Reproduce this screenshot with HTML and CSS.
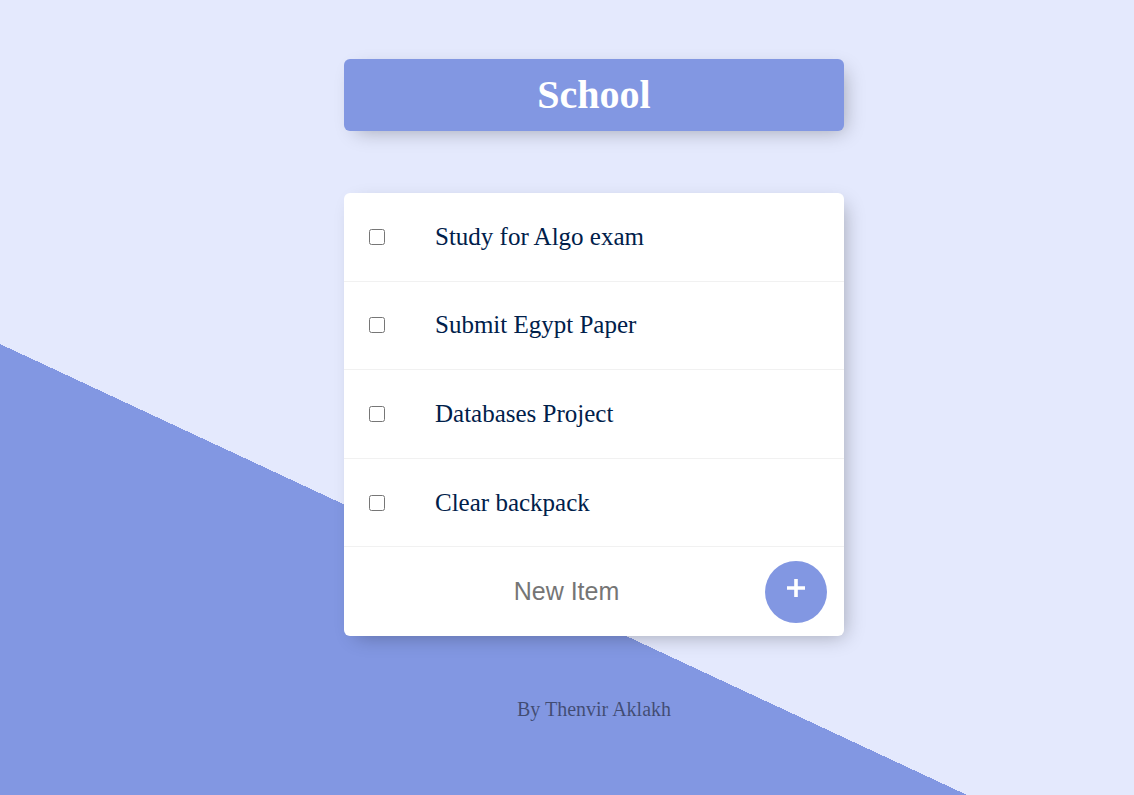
FILE: index.html
```
<!DOCTYPE html>
<html lang="en">
<head>
<meta charset="utf-8">
<title>School</title>
<link rel="stylesheet" href="styles.css">
</head>
<body>
<header class="box heading"><h1>School</h1></header>
<main class="box list">
  <div class="item"><input class="check" type="checkbox" id="t1"><label class="task" for="t1">Study for Algo exam</label></div>
  <div class="item"><input class="check" type="checkbox" id="t2"><label class="task" for="t2">Submit Egypt Paper</label></div>
  <div class="item"><input class="check" type="checkbox" id="t3"><label class="task" for="t3">Databases Project</label></div>
  <div class="item"><input class="check" type="checkbox" id="t4"><label class="task" for="t4">Clear backpack</label></div>
  <form class="item new-item">
    <input class="new-text" type="text" placeholder="New Item" aria-label="New Item" autocomplete="off">
    <button class="add" type="submit" aria-label="Add item">
      <svg width="18" height="18" viewBox="0 0 18 18" aria-hidden="true"><path d="M9 0v18M0 9h18" stroke="currentColor" stroke-width="3.6"/></svg>
    </button>
  </form>
</main>
<footer class="footer">By Thenvir Aklakh</footer>
</body>
</html>
```
FILE: styles.css
```
* { box-sizing: border-box; }

html {
  min-height: 100%;
  background-color: #e4e9fd;
  background-image: linear-gradient(25deg, #8297e2 50%, #e4e9fd 50%);
  background-size: calc(100% + 54px) 1242px;
  background-repeat: no-repeat;
}

body {
  margin: 0;
  padding: 59px 0 40px 54px;
  font-family: "Liberation Serif", "Times New Roman", serif;
}

.box {
  max-width: 500px;
  margin: 0 auto 62px;
  background: #fff;
  border-radius: 6px;
  box-shadow: 6px 6px 19px -6px rgba(0, 0, 0, 0.3);
}

.heading {
  padding: 13px;
  background: #8297e2;
  text-align: center;
}

h1 {
  margin: 0;
  color: #fff;
  font-size: 40px;
  line-height: 46px;
}

.list {
  display: grid;
  grid-auto-rows: 1fr;
  min-height: 443px;
}

.item {
  display: flex;
  align-items: center;
  border-bottom: 1px solid #f1f1f1;
}

.item:last-child { border-bottom: 0; }

.check {
  width: 16px;
  height: 16px;
  margin: 0 25px;
}

.task {
  padding: 0 25px;
  color: #00204a;
  font-size: 25px;
  line-height: 28px;
}

.new-item { padding: 0 17px 0 24px; }

.new-text {
  flex: 1;
  min-width: 0;
  height: 75px;
  padding: 0;
  border: 0;
  outline: 0;
  background: transparent;
  font-family: "Liberation Sans", Arial, sans-serif;
  font-size: 25px;
  text-align: center;
}

.new-text::placeholder { color: #757575; }

.add {
  display: flex;
  align-items: center;
  justify-content: center;
  width: 62px;
  height: 62px;
  padding: 0 0 8px;
  border: 0;
  border-radius: 50%;
  background: #8297e2;
  color: #fff;
}

.footer {
  color: rgba(0, 0, 0, 0.5);
  font-size: 20px;
  line-height: 22px;
  text-align: center;
}
```
